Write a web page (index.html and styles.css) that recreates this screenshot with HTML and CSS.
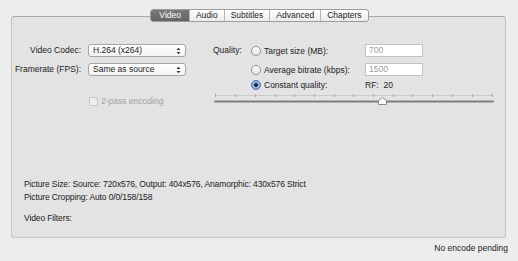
FILE: index.html
```html
<!DOCTYPE html>
<html lang="en">
  <head>
    <meta charset="UTF-8" />
    <title>Video settings</title>
    <link rel="stylesheet" href="styles.css">
  </head>
  <body>
    <div class="window">
      <div class="tabs">
        <span class="tab active">Video</span>
        <span class="tab">Audio</span>
        <span class="tab">Subtitles</span>
        <span class="tab">Advanced</span>
        <span class="tab">Chapters</span>
      </div>

      <div class="panel">
        <div class="top">
          <div class="left">
            <div class="form">
              <label>Video Codec:</label>
              <div class="popup">H.264 (x264)<svg class="arrows" width="5" height="8" viewBox="0 0 5 8"><path d="M0.5 3L2.5 0.8L4.5 3Z M0.5 5L2.5 7.2L4.5 5Z" fill="#333"/></svg></div>
              <label>Framerate (FPS):</label>
              <div class="popup">Same as source<svg class="arrows" width="5" height="8" viewBox="0 0 5 8"><path d="M0.5 3L2.5 0.8L4.5 3Z M0.5 5L2.5 7.2L4.5 5Z" fill="#333"/></svg></div>
            </div>
            <div class="check disabled">
              <span class="box"></span>2-pass encoding
            </div>
          </div>

          <div class="right">
            <div class="quality">
              <label class="qlabel">Quality:</label>
              <div class="radio"><span class="dot"></span>Target size (MB):</div>
              <div class="field">700</div>

              <div></div>
              <div class="radio"><span class="dot"></span>Average bitrate (kbps):</div>
              <div class="field">1500</div>

              <div></div>
              <div class="radio on"><span class="dot"></span>Constant quality:</div>
              <div class="rf">RF:&nbsp; 20</div>
            </div>
            <svg class="slider" width="280" height="14" viewBox="0 0 280 14">
              <line x1="1" y1="4.5" x2="279" y2="4.5" stroke="#cbcbcb" stroke-width="1"/>
              <g stroke="#a9a9a9" stroke-width="1">
                <line x1="1.5" y1="3" x2="1.5" y2="6"/>
                <line x1="21.5" y1="3" x2="21.5" y2="6"/>
                <line x1="41.5" y1="3" x2="41.5" y2="6"/>
                <line x1="61.5" y1="3" x2="61.5" y2="6"/>
                <line x1="80.5" y1="3" x2="80.5" y2="6"/>
                <line x1="100.5" y1="3" x2="100.5" y2="6"/>
                <line x1="120.5" y1="3" x2="120.5" y2="6"/>
                <line x1="139.5" y1="3" x2="139.5" y2="6"/>
                <line x1="159.5" y1="3" x2="159.5" y2="6"/>
                <line x1="179.5" y1="3" x2="179.5" y2="6"/>
                <line x1="198.5" y1="3" x2="198.5" y2="6"/>
                <line x1="218.5" y1="3" x2="218.5" y2="6"/>
                <line x1="238.5" y1="3" x2="238.5" y2="6"/>
                <line x1="258.5" y1="3" x2="258.5" y2="6"/>
                <line x1="278.5" y1="3" x2="278.5" y2="6"/>
              </g>
              <rect x="0" y="9.5" width="280" height="2" rx="1" fill="#7d7d7d"/>
              <path d="M164.5 13.5L164.5 9.5L168.5 6.5L172.5 9.5L172.5 13.5Z" fill="#fafafa" stroke="#8a8a8a" stroke-width="1"/>
            </svg>
          </div>
        </div>

        <div class="info">
          <p>Picture Size: Source: 720x576, Output: 404x576, Anamorphic: 430x576 Strict</p>
          <p>Picture Cropping: Auto 0/0/158/158</p>
          <p class="filters">Video Filters:</p>
        </div>
      </div>

      <div class="status">No encode pending</div>
    </div>
  </body>
</html>
```

FILE: styles.css
```css
html,
body {
  margin: 0;
  padding: 0;
  background-color: #ededed;
  font-family: 'Liberation Sans', Arial, sans-serif;
  font-size: 8.5px;
  color: #222;
}

.window {
  width: 518px;
  height: 261px;
  box-sizing: border-box;
  padding: 9px 12px 0 11px;
  display: flex;
  flex-direction: column;
}

/* segmented tab bar */
.tabs {
  align-self: center;
  display: flex;
  height: 11px;
  margin-left: 2px;
  margin-bottom: -6px;
  z-index: 1;
  border: 1px solid #9c9c9c;
  border-radius: 3px;
  background: linear-gradient(#ffffff, #ececec);
  overflow: hidden;
}

.tab {
  display: flex;
  align-items: center;
  padding: 0 6px;
  border-left: 1px solid #b4b4b4;
  line-height: 11px;
}

.tab:first-child {
  border-left: 0;
}

.tab.active {
  background: linear-gradient(#7a7a7a, #636363);
  color: #fff;
  padding: 0 8px;
}

.panel {
  height: 222px;
  box-sizing: border-box;
  border: 1px solid #c4c4c4;
  border-top-color: #a9a9a9;
  border-radius: 3px;
  background-color: #e3e3e3;
  padding: 27px 12px 0 12px;
  display: flex;
  flex-direction: column;
}

.top {
  display: flex;
  gap: 26px;
  margin-left: -11px;
}

.left {
  width: 175px;
}

.form {
  display: grid;
  grid-template-columns: 68px 98px;
  column-gap: 7px;
  row-gap: 6px;
}

.form label {
  text-align: right;
  white-space: nowrap;
  line-height: 13px;
}

.popup {
  height: 13px;
  box-sizing: border-box;
  border: 1px solid #a6a6a6;
  border-radius: 3px;
  background: linear-gradient(#ffffff, #f3f3f3);
  padding: 0 4px;
  line-height: 11px;
  display: flex;
  justify-content: space-between;
  align-items: center;
}

.check {
  display: flex;
  align-items: center;
  gap: 3px;
  margin: 20px 0 0 76px;
}

.check.disabled {
  color: #a2a2a2;
}

.box {
  width: 7px;
  height: 7px;
  border: 1px solid #c6c6c6;
  border-radius: 2px;
  background: #eeeeee;
}

.right {
  width: 280px;
}

.quality {
  display: grid;
  grid-template-columns: 38px 114px 58px;
  grid-template-rows: 13px 13px 12px;
  row-gap: 6px;
  align-items: center;
}

.quality > div:nth-child(7),
.quality > div:nth-child(8),
.quality > div:nth-child(9) {
  margin-top: -6px;
}

.qlabel {
  line-height: 13px;
}

.radio {
  display: flex;
  align-items: center;
  gap: 3px;
}

.dot {
  width: 8px;
  height: 8px;
  border: 1px solid #8f8f8f;
  border-radius: 50%;
  background: linear-gradient(#ffffff, #e9e9e9);
}

.radio.on .dot {
  border-color: #4a6ea5;
  background: radial-gradient(circle, #1d2a3c 0 1.6px, #9cc0ea 2.2px, #5f95d6 100%);
}

.field {
  height: 13px;
  box-sizing: border-box;
  border: 1px solid #c3c3c3;
  background: #ffffff;
  color: #9b9b9b;
  padding-left: 3px;
  line-height: 11px;
}

.rf {
  line-height: 12px;
}

.slider {
  display: block;
  margin-top: -3px;
  margin-left: 1px;
}

.info {
  margin-top: auto;
  padding-bottom: 12px;
  letter-spacing: -0.12px;
}

.info p {
  margin: 0;
  line-height: 13px;
}

.info p.filters {
  margin-top: 8px;
}

.status {
  text-align: right;
  margin-top: 5px;
  margin-right: -2px;
  line-height: 11px;
}
```
